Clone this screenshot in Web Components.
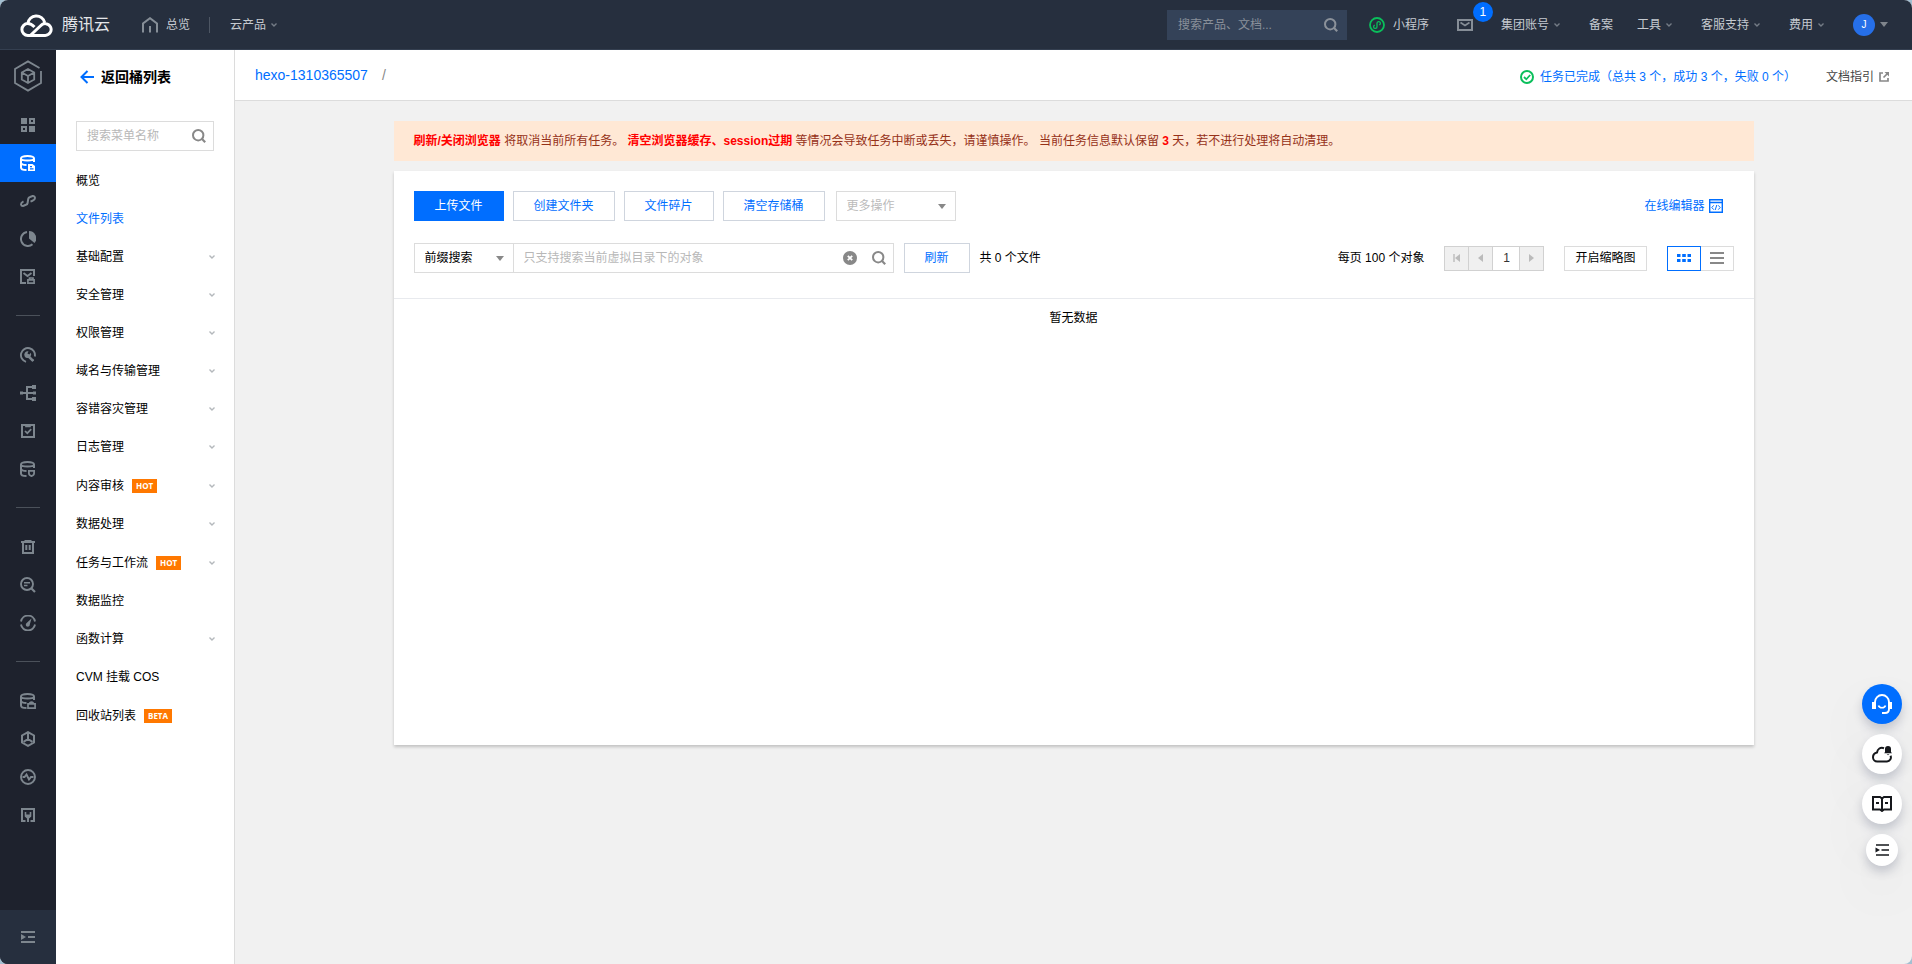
<!DOCTYPE html>
<html lang="zh-CN">
<head>
<meta charset="utf-8">
<meta name="viewport" content="width=device-width, initial-scale=1">
<title>对象存储 - 文件列表</title>
<style>
  html { background: #a3bfd1; height: 100%; }
  body {
    margin: 0; height: 100%;
    font: 12px/18px "Liberation Sans", "Noto Sans CJK SC", sans-serif;
    color: #000;
  }
</style>
</head>
<body>
<cos-app></cos-app>

<script>
/* Registers an element whose shadow root holds the given markup. */
function define(name, html, ready) {
  const tpl = document.createElement('template');
  tpl.innerHTML = html;
  customElements.define(name, class extends HTMLElement {
    constructor() {
      super();
      this.attachShadow({ mode: 'open' }).append(tpl.content.cloneNode(true));
    }
    connectedCallback() { if (ready) ready.call(this, this.shadowRoot); }
  });
}

const RESET = `
  *, *::before { box-sizing: border-box; }
  a { color: inherit; text-decoration: none; }
  button, input, select { font: inherit; color: inherit; margin: 0; padding: 0; border: 0; border-radius: 0; background: none; outline: 0; }
  button { cursor: pointer; }
  select { appearance: none; }
`;

/* ---------- icons: [width, height, markup] ---------- */
const DB = '<path d="M1 3.500C1 2 3.500 1 7.500 1S14 2 14 3.500 11.500 5.500 7.500 5.500 1 5 1 3.500V12.500C1 14 3 15 6.500 15M14 3.500V7M1 8C1.500 9.500 3.500 10 6.500 10" stroke-width="2"/>';
const ICONS = {
  cloud: [33, 24, '<path d="M7.800 10.500A8.600 8.600 0 0 1 24.700 9.500M14.500 14C12.500 12 10.500 10.600 7.800 10.600A5.900 5.900 0 0 0 7.800 22.400H25.300A5.900 5.900 0 1 0 20.600 12.800L10.800 22" stroke-width="3"/>'],
  home: [16, 16, '<path d="M1 15.500V6.500L8 1.200L15 6.500V15.500M8 9V15.500" stroke-width="2"/>'],
  chevron: [6, 4, '<path d="M.5 .5L3 3L5.500 .5" stroke-width="1.400"/>'],
  caret: [8, 5, '<path d="M0 0H8L4 5Z" fill="currentColor" stroke="none"/>'],
  search: [14, 14, '<circle cx="6.200" cy="6.200" r="5.200" stroke-width="2"/><path d="M9.800 9.800L13.200 13.200" stroke-width="2.200"/>'],
  mini: [16, 16, '<circle cx="8" cy="8" r="7" stroke-width="1.800"/><path d="M5.800 8.100A1.700 1.700 0 1 0 8 9.700V6.300A1.700 1.700 0 1 1 10.200 7.900" stroke-width="1.300"/>'],
  mail: [16, 12, '<rect x="1" y="1" width="14" height="10" stroke-width="2"/><path d="M3.500 3.500L8 6.500L12.500 3.500" stroke-width="1.600"/>'],
  back: [14, 14, '<path d="M1.500 7H14M7.500 1L1.500 7L7.500 13" stroke-width="2"/>'],
  done: [14, 14, '<circle cx="7" cy="7" r="6" stroke-width="2"/><path d="M4 7L6.300 9.300L10.200 5" stroke-width="1.800"/>'],
  external: [10, 10, '<path d="M4 1H1V9H9V6M4.500 5.500L8.500 1.500" stroke-width="1.700"/><path d="M5.500 0H10V4.500Z" fill="currentColor" stroke="none"/>'],
  product: [28, 32, '<path d="M27 11V23L14 30.600L1 23V9L14 1.400L25.500 8" stroke-width="1.800"/><path d="M14 9L20.200 12.500V19.500L14 23L7.800 19.500V12.500ZM7.800 12.500L14 16L20.200 12.500M14 16V23" stroke-width="1.800"/>'],
  grid: [14, 14, '<path d="M0 0H6V6H0ZM8 8H14V14H8Z" fill="currentColor" stroke="none"/><path d="M9 1H13V5H9ZM1 9H5V13H1Z" stroke-width="2"/>'],
  bucket: [16, 16, DB + '<path d="M8 9H12.500L15 11V16H8Z" fill="currentColor" stroke="none"/><path d="M10 11.600H12M10 13.800H13.500" stroke="#006eff" stroke-width="1.200"/>'],
  link: [16, 12, '<path d="M4.500 10.500L3 11A2 2 0 0 1 1 9.300C1 7.700 2 7 3.500 6.300M4 10.500L6 9.700A2 2 0 0 0 7.600 8L8.200 4A2.500 2.500 0 0 1 10 2L12.700 1.100A2 2 0 0 1 15 3C15 4.500 14 5.200 12.500 5.800L10.500 6.600" stroke-width="2"/>'],
  pie: [16, 16, '<path d="M7 1A7 7 0 1 0 12.500 13.300" stroke-width="2"/><path d="M9 0A7.300 7.300 0 0 1 14.500 12L9 7.500Z" fill="currentColor" stroke="none"/>'],
  picture: [16, 16, '<path d="M6 14H1V1H14V7" stroke-width="2"/><path d="M3.500 4L7.500 7L11.500 4" stroke-width="1.800"/><path d="M7.900 10.900H14.100V14.100H7.900ZM9.500 11V9H13V11" stroke-width="1.700"/>'],
  wrench: [16, 16, '<path d="M6 14.800A7 7 0 1 1 14.800 9.500M13.500 12.500L12 14" stroke-width="1.900"/><path d="M4.600 9.200A3.500 3.500 0 0 1 8.500 4.300L7.400 6.400L9.400 7.600L10.800 5.800A3.500 3.500 0 0 1 10.500 9.400L14 13L12.200 14.800L8.300 11A3.500 3.500 0 0 1 4.600 9.200Z" fill="currentColor" stroke="none"/>'],
  tree: [16, 16, '<path d="M0 8H14M12 2H7V14H12" stroke-width="2"/><path d="M12 0H16V4H12ZM12 12H16V16H12ZM0 6.500H3V9.500H0ZM13 6.500H16V9.500H13Z" fill="currentColor" stroke="none"/>'],
  task: [14, 14, '<path d="M1 1H13V13H1Z" stroke-width="2"/><path d="M5 1V2.500H9V1M4 7L6.300 9.200L10.200 5.200" stroke-width="1.700"/>'],
  dbShield: [16, 16, DB + '<path d="M8.900 9.900H14.100V12.300C14.100 13.800 13 14.700 11.500 15.100C10 14.700 8.900 13.800 8.900 12.300Z" stroke-width="1.800"/>'],
  trash: [14, 14, '<path d="M0 2H14M3.500 1H10.500M2 2V13H12V2M5.300 5V10M8.700 5V10" stroke-width="2"/>'],
  searchDoc: [16, 16, '<circle cx="7" cy="7" r="6" stroke-width="1.900"/><path d="M11.500 11.500L15 15" stroke-width="2.200"/><path d="M4 5.800H10M4 8.500H7.500" stroke-width="1.500"/>'],
  gauge: [16, 16, '<path d="M1 6.500A7.100 7.100 0 0 1 15 6.500M1 9.500A7.100 7.100 0 0 0 15 9.500" stroke-width="1.900"/><path d="M11.500 3.500L9.800 9.500A2 2 0 1 1 6.400 8.300Z" fill="currentColor" stroke="none"/>'],
  dbLock: [16, 16, DB + '<path d="M8 10.900H15.100V15.100H8ZM9.700 11C9.700 8.500 13.300 8.500 13.300 11" stroke-width="1.700"/>'],
  cube: [14, 16, '<path d="M7 1.100L13 4.500V11.500L7 14.900L1 11.500V4.500ZM7 2V8L2.500 10.800M7 8L11.500 10.800" stroke-width="2"/>'],
  pulse: [16, 16, '<circle cx="8" cy="8" r="7" stroke-width="1.900"/><path d="M2.500 8H4.500L6.500 5.500L9 10.500L11 8H13.500" stroke-width="1.900"/>'],
  plug: [14, 14, '<path d="M4.500 13H1V1H13V13H9.500" stroke-width="2"/><path d="M3.700 4H5.300V6.500H8.700V4H10.300V8.500L8 10.500V14H6V10.500L3.700 8.500Z" fill="currentColor" stroke="none"/>'],
  indent: [14, 12, '<path d="M0 1H14M7 6H14M0 11H14" stroke-width="2"/><path d="M0 3L5 6L0 9Z" fill="currentColor" stroke="none"/>'],
  indentThin: [14, 12, '<path d="M1 1H14M6.500 6H14M1 11H14" stroke-width="1.400"/><path d="M.5 3.500L5 6L.5 8.500Z" fill="currentColor" stroke="none"/>'],
  clear: [14, 14, '<circle cx="7" cy="7" r="7" fill="currentColor" stroke="none"/><path d="M4.800 4.800L9.200 9.200M9.200 4.800L4.800 9.200" stroke="#fff" stroke-width="1.800"/>'],
  code: [14, 14, '<path d="M.7 .7H13.300V13.300H.7ZM.7 3.500H13.300" stroke-width="1.400"/><path d="M4.800 6.300L2.800 8.500L4.800 10.700M9.200 6.300L11.200 8.500L9.200 10.700M7.800 6L6.200 11" stroke-width="1"/>'],
  first: [7, 8, '<path d="M1 0V8" stroke-width="1.400"/><path d="M7 0V8L2 4Z" fill="currentColor" stroke="none"/>'],
  prev: [5, 8, '<path d="M5 0V8L0 4Z" fill="currentColor" stroke="none"/>'],
  next: [5, 8, '<path d="M0 0V8L5 4Z" fill="currentColor" stroke="none"/>'],
  dots: [14, 8, '<path d="M0 0H3.500V3H0ZM5.200 0H8.800V3H5.200ZM10.500 0H14V3H10.500ZM0 5H3.500V8H0ZM5.200 5H8.800V8H5.200ZM10.500 5H14V8H10.500Z" fill="currentColor" stroke="none"/>'],
  lines: [14, 12, '<path d="M0 1H14M0 6H14M0 11H14" stroke-width="2"/>'],
  headset: [20, 20, '<path d="M3 8A7 7 0 0 1 17 8V15C17 18 15.500 19 13 19H10" stroke-width="1.900"/><path d="M0 8H4V15H0ZM16 8H20V15H16Z" fill="currentColor" stroke="none"/><path d="M6.500 11.500C7.500 14.500 12.500 14.500 13.500 11.500" stroke-width="1.700"/>'],
  cloudBell: [20, 17, '<path d="M12 2.200C8.500 .8 5.500 3 5 6.500C2.500 7 1 9 1 11.300A4.200 4.200 0 0 0 5.200 15.500H15A4 4 0 0 0 18.500 9.800" stroke-width="2"/><path d="M16 0A3 3 0 0 1 19 3V6L20 7.300H12.200L13 6V3A3 3 0 0 1 16 0ZM14.700 8.300H17.500L16 9.300Z" fill="currentColor" stroke="none"/>'],
  book: [20, 16, '<path d="M10 3V14.500M10 2.500L8 1H1V13.500H8L10 15L12 13.500H19V1H12Z" stroke-width="2"/><path d="M4 7H7M13 7H16" stroke-width="2"/>'],
};

define('cos-icon', `<style>
  :host { display: inline-flex; flex: none; }
  svg { display: block; fill: none; stroke: currentColor; }
</style>`, function (root) {
  if (root.querySelector('svg')) return;
  const [w, h, body] = ICONS[this.getAttribute('name')];
  const box = document.createElement('template');
  box.innerHTML = `<svg width="${w}" height="${h}" viewBox="0 0 ${w} ${h}" aria-hidden="true">${body}</svg>`;
  root.append(box.content);
});

/* ---------- top bar ---------- */
define('nav-item', `<style>${RESET}
  :host { display: flex; flex: none; }
  a { display: flex; align-items: center; gap: 8px; white-space: nowrap; }
  cos-icon { display: none; color: #747c86; }
  :host([menu]) a { gap: 5px; padding-right: 5px; }
  :host([menu]) cos-icon { display: inline-flex; }
</style><a href="#"><slot></slot><cos-icon name="chevron"></cos-icon></a>`);

define('cloud-header', `<style>${RESET}
  :host { display: flex; align-items: center; height: 50px; box-sizing: border-box; padding: 0 24px 0 20px; background: #262f3e; border-bottom: 1px solid #343f50; color: #c5cad0; }
  .brand { display: flex; align-items: center; gap: 9px; color: #fff; font-size: 16px; line-height: 24px; margin-right: 32px; }
  .brand span { color: #e4e6e9; }
  .grey { color: #868e97; }
  .rule { width: 1px; height: 16px; background: #4d5663; margin: 0 20px 0 19px; }
  .search { display: flex; align-items: center; width: 180px; height: 30px; margin: 0 22px 0 auto; padding: 0 9px 0 11px; background: #344258; color: #8b919a; }
  .search input { flex: 1; min-width: 0; }
  input::placeholder { color: #89909a; opacity: 1; }
  nav { display: flex; align-items: center; gap: 24px; }
  .mail { position: relative; display: flex; padding: 0 4px; }
  .count { position: absolute; left: 20px; top: -17px; width: 20px; height: 20px; border-radius: 10px; background: #006eff; color: #fff; text-align: center; line-height: 20px; }
  .green { color: #0abf5b; }
  .user { display: flex; align-items: center; gap: 5px; color: #7f858c; }
  .avatar { width: 22px; height: 22px; border-radius: 11px; background: #266fe8; color: #fff; text-align: center; line-height: 22px; font-size: 10px; }
</style>
<a class="brand" href="#"><cos-icon name="cloud"></cos-icon><span>腾讯云</span></a>
<nav-item><cos-icon class="grey" name="home"></cos-icon>总览</nav-item>
<div class="rule"></div>
<nav-item menu>云产品</nav-item>
<div class="search"><input type="text" aria-label="搜索产品、文档" placeholder="搜索产品、文档..."><cos-icon name="search"></cos-icon></div>
<nav aria-label="账户">
  <nav-item><cos-icon class="green" name="mini"></cos-icon>小程序</nav-item>
  <a class="mail grey" href="#" aria-label="站内信"><cos-icon name="mail"></cos-icon><span class="count">1</span></a>
  <nav-item menu>集团账号</nav-item>
  <nav-item>备案</nav-item>
  <nav-item menu>工具</nav-item>
  <nav-item menu>客服支持</nav-item>
  <nav-item menu>费用</nav-item>
  <button class="user" aria-label="账号"><span class="avatar">J</span><cos-icon name="caret"></cos-icon></button>
</nav>`);

/* ---------- icon rail ---------- */
define('icon-rail', `<style>${RESET}
  :host { display: flex; flex-direction: column; flex: none; width: 56px; background: #1e222d; color: #7d868e; overflow: hidden; }
  a, button { display: flex; align-items: center; justify-content: center; height: 38px; width: 100%; flex: none; }
  .product { height: 52px; margin-bottom: 4px; }
  .on { background: #006eff; color: #fff; }
  hr { width: 24px; height: 1px; border: 0; background: #4b515a; margin: 19px auto 20px; flex: none; }
  .fold { height: 54px; margin-top: auto; background: #262f3e; }
</style><nav aria-label="产品导航"></nav><button class="fold" aria-label="展开导航"><cos-icon name="indent"></cos-icon></button>`,
function (root) {
  const groups = [
    [['grid', '概览'], ['bucket', '存储桶列表'], ['link', '域名'], ['pie', '统计'], ['picture', '数据处理']],
    [['wrench', '工具'], ['tree', '流程'], ['task', '任务'], ['dbShield', '数据安全']],
    [['trash', '回收站'], ['searchDoc', '检索'], ['gauge', '监控']],
    [['dbLock', '密钥'], ['cube', '应用'], ['pulse', '诊断'], ['plug', '插件']],
  ];
  root.querySelector('nav').innerHTML =
    '<a class="product" href="#" aria-label="对象存储"><cos-icon name="product"></cos-icon></a>' +
    groups.map(g => g.map(([icon, label]) =>
      `<a href="#" aria-label="${label}"${icon === 'bucket' ? ' class="on"' : ''}><cos-icon name="${icon}"></cos-icon></a>`).join('')).join('<hr>');
});

/* ---------- bucket menu ---------- */
define('menu-item', `<style>${RESET}
  :host { display: block; }
  a { display: flex; align-items: center; height: 38px; padding: 0 19px 0 20px; }
  :host([badge]) a { height: 39px; }
  :host([active]) { color: #006eff; }
  .badge { display: none; margin-left: 8px; height: 14px; padding: 0 4px; background: #ff7800; color: #fff; font: bold 8px/14px "Open Sans", sans-serif; }
  :host([badge]) .badge { display: block; }
  cos-icon { display: none; margin-left: auto; color: #b4b8bc; }
  :host([more]) cos-icon { display: inline-flex; }
</style><a href="#"><slot></slot><span class="badge"></span><cos-icon name="chevron"></cos-icon></a>`,
function (root) { root.querySelector('.badge').textContent = this.getAttribute('badge') || ''; });

define('bucket-menu', `<style>${RESET}
  :host { display: block; box-sizing: border-box; flex: none; width: 179px; background: #fff; border-right: 1px solid #dcdcdc; }
  h2 { margin: 0; padding: 16px 24px 0; font-size: 14px; line-height: 22px; }
  h2 a { display: flex; align-items: center; gap: 7px; }
  h2 cos-icon { color: #006eff; }
  .search { display: flex; align-items: center; height: 30px; margin: 33px 20px 11px; padding: 0 7px 0 10px; border: 1px solid #dcdcdc; color: #888; }
  input { flex: 1; min-width: 0; }
  input::placeholder { color: #b8b8b8; opacity: 1; }
</style>
<h2><a href="#"><cos-icon name="back"></cos-icon>返回桶列表</a></h2>
<div class="search"><input type="text" aria-label="搜索菜单名称" placeholder="搜索菜单名称"><cos-icon name="search"></cos-icon></div>
<nav aria-label="存储桶菜单">
  <menu-item>概览</menu-item>
  <menu-item active>文件列表</menu-item>
  <menu-item more>基础配置</menu-item>
  <menu-item more>安全管理</menu-item>
  <menu-item more>权限管理</menu-item>
  <menu-item more>域名与传输管理</menu-item>
  <menu-item more>容错容灾管理</menu-item>
  <menu-item more>日志管理</menu-item>
  <menu-item more badge="HOT">内容审核</menu-item>
  <menu-item more>数据处理</menu-item>
  <menu-item more badge="HOT">任务与工作流</menu-item>
  <menu-item>数据监控</menu-item>
  <menu-item more>函数计算</menu-item>
  <menu-item>CVM 挂载 COS</menu-item>
  <menu-item badge="BETA">回收站列表</menu-item>
</nav>`);

/* ---------- path bar ---------- */
define('path-bar', `<style>${RESET}
  :host { display: flex; align-items: center; box-sizing: border-box; flex: none; height: 51px; padding: 4px 23px 0 20px; background: #fff; border-bottom: 1px solid #dcdcdc; }
  .path { display: flex; gap: 14px; margin-right: auto; padding-bottom: 4px; font-size: 14px; line-height: 22px; color: #888; }
  .path a, .status { color: #006eff; }
  .status { display: flex; align-items: center; gap: 6px; margin-right: 30px; }
  .status cos-icon { color: #0abf5b; }
  .doc { display: flex; align-items: center; gap: 5px; color: #444; }
  .doc cos-icon { color: #888; }
</style>
<nav class="path" aria-label="路径"><a href="#">hexo-1310365507</a><span>/</span></nav>
<a class="status" href="#"><cos-icon name="done"></cos-icon>任务已完成（总共 3 个，成功 3 个，失败 0 个）</a>
<a class="doc" href="#">文档指引<cos-icon name="external"></cos-icon></a>`);

define('notice-bar', `<style>
  :host { display: block; padding: 11px 20px; background: #ffe8d5; color: #963118; }
</style><slot></slot>`);

/* ---------- controls ---------- */
define('cos-button', `<style>${RESET}
  :host { display: block; flex: none; }
  button { display: block; height: 30px; padding: 0 20px; border: 1px solid #cfd5de; background: #fff; color: #006eff; white-space: nowrap; }
  :host([primary]) button { background: #006eff; border-color: #006eff; color: #fff; }
  :host([plain]) button { height: 25px; padding: 0 10px; border-color: #dcdcdc; color: #000; }
</style><button type="button"><slot></slot></button>`);

define('cos-select', `<style>${RESET}
  :host { display: block; flex: none; width: 120px; color: #000; }
  :host([narrow]) { width: 100px; }
  :host([muted]) { color: #bbb; }
  div { position: relative; }
  select { display: block; width: 100%; height: 30px; padding: 0 10px; border: 1px solid #dcdcdc; background: #fff; }
  cos-icon { position: absolute; right: 10px; top: 13px; color: #888; pointer-events: none; }
</style><div><select><option></option></select><cos-icon name="caret"></cos-icon></div>`,
function (root) {
  root.querySelector('select').setAttribute('aria-label', this.getAttribute('label'));
  root.querySelector('option').textContent = this.getAttribute('value');
});

define('page-turner', `<style>${RESET}
  :host { display: flex; flex: none; height: 25px; }
  button, input { width: 25px; height: 25px; border: 1px solid #d1d1d1; margin-right: -1px; display: flex; align-items: center; justify-content: center; }
  button { background: #f0f0f0; color: #bbb; }
  button:last-child { margin-right: 0; }
  input { width: 28px; text-align: center; color: #333; }
</style>
<button type="button" aria-label="第一页"><cos-icon name="first"></cos-icon></button>
<button type="button" aria-label="上一页"><cos-icon name="prev"></cos-icon></button>
<input type="text" aria-label="页码" value="1">
<button type="button" aria-label="下一页"><cos-icon name="next"></cos-icon></button>`);

define('view-switch', `<style>${RESET}
  :host { display: flex; flex: none; }
  button { display: flex; align-items: center; justify-content: center; width: 33px; height: 25px; border: 1px solid #dcdcdc; border-left: 0; color: #888; }
  .on { width: 34px; border: 1px solid #006eff; color: #006eff; }
</style>
<button type="button" class="on" aria-label="网格视图"><cos-icon name="dots"></cos-icon></button>
<button type="button" aria-label="列表视图"><cos-icon name="lines"></cos-icon></button>`);

/* ---------- file panel ---------- */
define('file-panel', `<style>${RESET}
  :host { display: block; background: #fff; box-shadow: 0 2px 3px rgba(0, 0, 0, .2); }
  .row { display: flex; align-items: center; padding: 0 20px; }
  .actions { padding-top: 20px; gap: 11px; }
  .group { display: flex; gap: 9px; }
  .editor { display: flex; align-items: center; gap: 4px; margin-left: auto; padding-right: 11px; color: #006eff; }
  .filters { padding-top: 22px; padding-bottom: 25px; border-bottom: 1px solid #e8eaee; }
  .find { display: flex; align-items: center; flex: none; width: 381px; height: 30px; margin: 0 10px 0 -1px; padding: 0 7px 0 10px; border: 1px solid #dcdcdc; color: #888; }
  .find input { flex: 1; min-width: 0; }
  .find button { display: flex; margin-right: 15px; }
  input::placeholder { color: #b8b8b8; opacity: 1; }
  .total { margin-left: 10px; }
  .pages { display: flex; align-items: center; gap: 20px; margin-left: auto; }
  .list { min-height: 446px; padding-top: 10px; text-align: center; }
</style>
<div class="row actions">
  <div class="group">
    <cos-button primary>上传文件</cos-button>
    <cos-button>创建文件夹</cos-button>
    <cos-button>文件碎片</cos-button>
    <cos-button>清空存储桶</cos-button>
  </div>
  <cos-select muted label="更多操作" value="更多操作"></cos-select>
  <a class="editor" href="#">在线编辑器<cos-icon name="code"></cos-icon></a>
</div>
<div class="row filters">
  <cos-select narrow label="搜索方式" value="前缀搜索"></cos-select>
  <div class="find"><input type="text" aria-label="搜索对象" placeholder="只支持搜索当前虚拟目录下的对象"><button type="button" aria-label="清除"><cos-icon name="clear"></cos-icon></button><cos-icon name="search"></cos-icon></div>
  <cos-button>刷新</cos-button>
  <span class="total">共 0 个文件</span>
  <div class="pages">
    <span>每页 100 个对象</span>
    <page-turner></page-turner>
    <cos-button plain>开启缩略图</cos-button>
    <view-switch></view-switch>
  </div>
</div>
<div class="list">暂无数据</div>`);

/* ---------- floating helpers ---------- */
define('float-tools', `<style>${RESET}
  :host { display: flex; flex-direction: column; align-items: center; gap: 10px; }
  button { display: flex; align-items: center; justify-content: center; width: 40px; height: 40px; border-radius: 50%; background: #fff; color: #16181c; box-shadow: 0 6px 10px rgba(55, 65, 95, .22), 0 24px 60px rgba(55, 65, 80, .07); }
  .main { background: #006eff; color: #fff; }
  .small { width: 32px; height: 32px; }
</style>
<button type="button" class="main" aria-label="在线客服"><cos-icon name="headset"></cos-icon></button>
<button type="button" aria-label="通知"><cos-icon name="cloudBell"></cos-icon></button>
<button type="button" aria-label="文档"><cos-icon name="book"></cos-icon></button>
<button type="button" class="small" aria-label="收起"><cos-icon name="indentThin"></cos-icon></button>`);

/* ---------- page ---------- */
define('cos-app', `<style>${RESET}
  :host { display: flex; flex-direction: column; box-sizing: border-box; height: 100%; border-radius: 8px; overflow: hidden; background: #f1f1f1; position: relative; }
  .body { display: flex; flex: 1; min-height: 0; }
  main { flex: 1; min-width: 0; display: flex; flex-direction: column; }
  .content { display: flex; flex-direction: column; gap: 10px; width: 100%; max-width: 1400px; margin: 0 auto; padding: 20px; }
  b { color: #f00; }
  float-tools { position: absolute; right: 10px; bottom: 98px; }
</style>
<cloud-header></cloud-header>
<div class="body">
  <icon-rail></icon-rail>
  <bucket-menu></bucket-menu>
  <main>
    <path-bar></path-bar>
    <div class="content">
      <notice-bar><b>刷新/关闭浏览器</b> 将取消当前所有任务。 <b>清空浏览器缓存、session过期</b> 等情况会导致任务中断或丢失，请谨慎操作。 当前任务信息默认保留 <b>3</b> 天，若不进行处理将自动清理。</notice-bar>
      <file-panel></file-panel>
    </div>
  </main>
</div>
<float-tools></float-tools>`);
</script>
</body>
</html>
